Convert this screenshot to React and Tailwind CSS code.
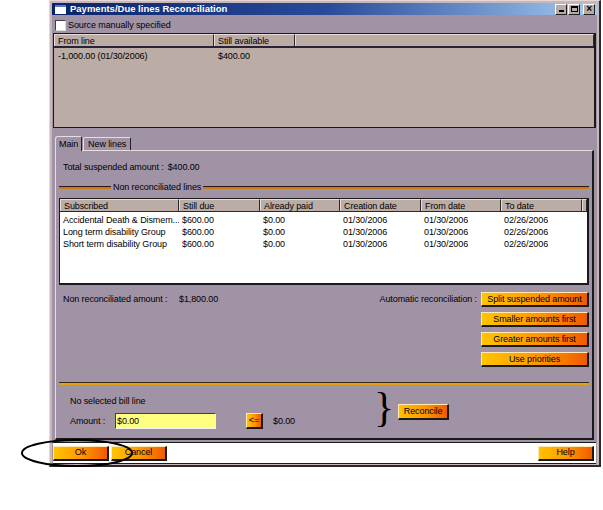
import React from "react";

const OrangeButton = ({ label, className = "" }) => (
  <button
    className={`flex items-center justify-center whitespace-nowrap bg-gradient-to-r from-[#ffc400] via-[#ff9a00] to-[#f05a00] border-t border-l border-[#ffe8b0] border-b-2 border-r-2 border-b-[#1a1a1a] border-r-[#1a1a1a] text-black text-[9px] tracking-[-0.1px] leading-none ${className}`}
  >
    {label}
  </button>
);

const HeaderCell = ({ label, width, last }) => (
  <div
    className={`h-full flex items-center pl-[3px] border-t border-l border-[#e8dcd8] border-r border-r-[#2a2a2a] whitespace-nowrap overflow-hidden ${
      last ? "flex-1" : ""
    }`}
    style={width ? { width } : undefined}
  >
    {label}
  </div>
);

const dueLines = [
  ["Accidental Death & Dismem...", "$600.00", "$0.00", "01/30/2006", "01/30/2006", "02/26/2006"],
  ["Long term disability Group", "$600.00", "$0.00", "01/30/2006", "01/30/2006", "02/26/2006"],
  ["Short term disability Group", "$600.00", "$0.00", "01/30/2006", "01/30/2006", "02/26/2006"],
];

const dueCols = [
  { label: "Subscribed", width: 119 },
  { label: "Still due", width: 81 },
  { label: "Already paid", width: 80 },
  { label: "Creation date", width: 81 },
  { label: "From date", width: 80 },
  { label: "To date", width: 81 },
];

const App = () => {
  return (
    <div className="relative w-[603px] h-[510px] bg-white font-['Liberation_Sans',Arial,sans-serif] text-[9px] tracking-[-0.1px] text-black leading-[12px]">
      <div className="ml-[49px] w-[552px] h-[467px] flex flex-col bg-[#c9b6b8] border-t border-l border-[#e6d8d8] border-r-2 border-b-2 border-r-[#2a2a2a] border-b-[#2a2a2a] p-[2px]">
        {/* title bar */}
        <div className="h-[16px] flex items-center bg-gradient-to-r from-[#0a246a] via-[#2a4a98] to-[#a6caf0] pl-[3px] pr-[2px]">
          <div className="w-[11px] h-[9px] bg-white border-t-2 border-[#5a7ad0] mr-[4px]" />
          <span className="text-white font-bold text-[9.5px] tracking-[0px]">
            Payments/Due lines Reconciliation
          </span>
          <div className="ml-auto flex gap-[1px]">
            <div className="w-[12px] h-[11px] bg-[#b8aaa8] border-t border-l border-white border-r border-b border-r-[#202020] border-b-[#202020] flex items-end justify-center pb-[2px]">
              <div className="w-[5px] h-[2px] bg-black" />
            </div>
            <div className="w-[12px] h-[11px] bg-[#b8aaa8] border-t border-l border-white border-r border-b border-r-[#202020] border-b-[#202020] flex items-center justify-center mr-[2px]">
              <div className="w-[7px] h-[6px] border border-black border-t-2" />
            </div>
            <div className="w-[12px] h-[11px] bg-[#b8aaa8] border-t border-l border-white border-r border-b border-r-[#202020] border-b-[#202020] flex items-center justify-center text-[10px] font-bold leading-none">
              ×
            </div>
          </div>
        </div>

        {/* body */}
        <div className="flex-1 flex flex-col bg-[#a093a5] px-[1px]">
          <div className="h-[18px] flex items-center pl-[2px] pt-[2px]">
            <div className="w-[11px] h-[11px] bg-white border border-[#404040] border-r-[#e0e0e0] border-b-[#e0e0e0] mr-[2px]" />
            <span>Source manually specified</span>
          </div>

          {/* top list */}
          <div className="h-[95px] bg-[#bbaca6] border border-[#1a1a1a] border-r-2">
            <div className="h-[14px] flex border-b-2 border-[#2a2238]">
              <HeaderCell label="From line" width={160} />
              <HeaderCell label="Still available" width={81} />
              <HeaderCell label="" last />
            </div>
            <div className="flex pt-[2px] h-[14px] items-center">
              <div className="w-[160px] pl-[4px]">-1,000.00 (01/30/2006)</div>
              <div className="w-[81px] pl-[4px]">$400.00</div>
            </div>
          </div>

          {/* tabs */}
          <div className="mt-[6px] flex items-end h-[16px] pl-[2px]">
            <div className="h-[15px] px-[3px] flex items-center bg-[#a093a5] border-t border-l border-[#e8dcdc] border-r border-r-[#202020] rounded-tl-[3px] rounded-tr-[2px] -mb-[1px] relative z-10">
              Main
            </div>
            <div className="h-[13px] px-[4px] flex items-center border-t border-l border-[#e8dcdc] border-r border-r-[#202020] rounded-t-[2px] ml-[1px]">
              New lines
            </div>
          </div>

          {/* tab panel */}
          <div className="h-[290px] ml-[2px] mr-[2px] border-t border-l border-[#e8dcdc] border-r-2 border-b-2 border-r-[#1a1a1a] border-b-[#1a1a1a] flex flex-col px-[3px]">
            <div className="mt-[10px] pl-[4px] h-[12px] flex">
              <span className="mr-[4px]">Total suspended amount :</span>
              <span>$400.00</span>
            </div>

            <div className="mt-[8px] h-[12px] flex items-center">
              <div className="w-[52px] h-[3px] border-t border-[#2a1a10] bg-[#c87a10]" />
              <span className="px-[2px]">Non reconciliated lines</span>
              <div className="flex-1 h-[3px] border-t border-[#2a1a10] bg-[#c87a10]" />
            </div>

            {/* due lines table */}
            <div className="mt-[5px] h-[87px] bg-white border border-[#1a1a1a] border-r-2 border-b-2">
              <div className="h-[13px] flex bg-[#bbaca6] border-b border-[#2a2a2a]">
                {dueCols.map((c) => (
                  <HeaderCell key={c.label} label={c.label} width={c.width} />
                ))}
                <HeaderCell label="" last />
              </div>
              <div className="pt-[2px]">
                {dueLines.map((row, i) => (
                  <div key={i} className="flex h-[12px] items-center">
                    {row.map((cell, j) => (
                      <div
                        key={j}
                        className="pl-[3px] whitespace-nowrap overflow-hidden"
                        style={{ width: dueCols[j].width }}
                      >
                        {cell}
                      </div>
                    ))}
                  </div>
                ))}
              </div>
            </div>

            {/* amounts + automatic reconciliation */}
            <div className="mt-[7px] flex">
              <div className="pl-[4px] flex h-[14px] items-center whitespace-nowrap">
                <span className="w-[116px]">Non reconciliated amount :</span>
                <span>$1,800.00</span>
              </div>
              <div className="ml-auto flex">
                <span className="h-[14px] flex items-center mr-[4px] whitespace-nowrap">
                  Automatic reconciliation :
                </span>
                <div className="flex flex-col gap-[5px]">
                  <OrangeButton label="Split suspended amount" className="w-[108px] h-[15px]" />
                  <OrangeButton label="Smaller amounts first" className="w-[108px] h-[15px]" />
                  <OrangeButton label="Greater amounts first" className="w-[108px] h-[15px]" />
                  <OrangeButton label="Use priorities" className="w-[108px] h-[15px]" />
                </div>
              </div>
            </div>

            <div className="mt-[15px] h-[3px] border-t border-[#3a2a18] bg-[#e0a010]" />

            {/* bill line */}
            <div className="flex">
              <div className="flex flex-col pl-[11px]">
                <div className="mt-[10px] h-[12px]">No selected bill line</div>
                <div className="mt-[6px] flex items-center h-[16px]">
                  <span className="w-[45px]">Amount :</span>
                  <div className="w-[101px] h-[16px] bg-[#ffff80] border-t border-l border-[#404040] border-r border-b border-r-[#f0f0f0] border-b-[#f0f0f0] pl-[1px] flex items-center">
                    $0.00
                  </div>
                  <OrangeButton label="<=" className="ml-[30px] w-[17px] h-[16px]" />
                  <span className="ml-[10px]">$0.00</span>
                </div>
              </div>
              <div className="ml-[79px] mt-[1px] h-[42px] flex items-center font-['Liberation_Serif',serif] text-[42px] leading-none">
                {"}"}
              </div>
              <div className="ml-[4px] mt-[19px]">
                <OrangeButton label="Reconcile" className="w-[51px] h-[16px]" />
              </div>
            </div>
          </div>

          {/* bottom strip */}
          <div className="mt-[2px] h-[22px] bg-white border-t border-[#1a1a1a] border-b border-b-[#1a1a1a] flex items-center">
            <OrangeButton label="Ok" className="w-[56px] h-[15px]" />
            <OrangeButton label="Cancel" className="ml-[2px] w-[56px] h-[15px]" />
            <OrangeButton label="Help" className="ml-auto mr-[2px] w-[56px] h-[15px]" />
          </div>
        </div>
      </div>

      {/* hand-drawn annotation around the Ok button */}
      <svg className="absolute left-0 top-0 pointer-events-none" width="603" height="510">
        <ellipse cx="77" cy="453" rx="55" ry="13" fill="none" stroke="#000" strokeWidth="2" />
      </svg>
    </div>
  );
};

export default App;
